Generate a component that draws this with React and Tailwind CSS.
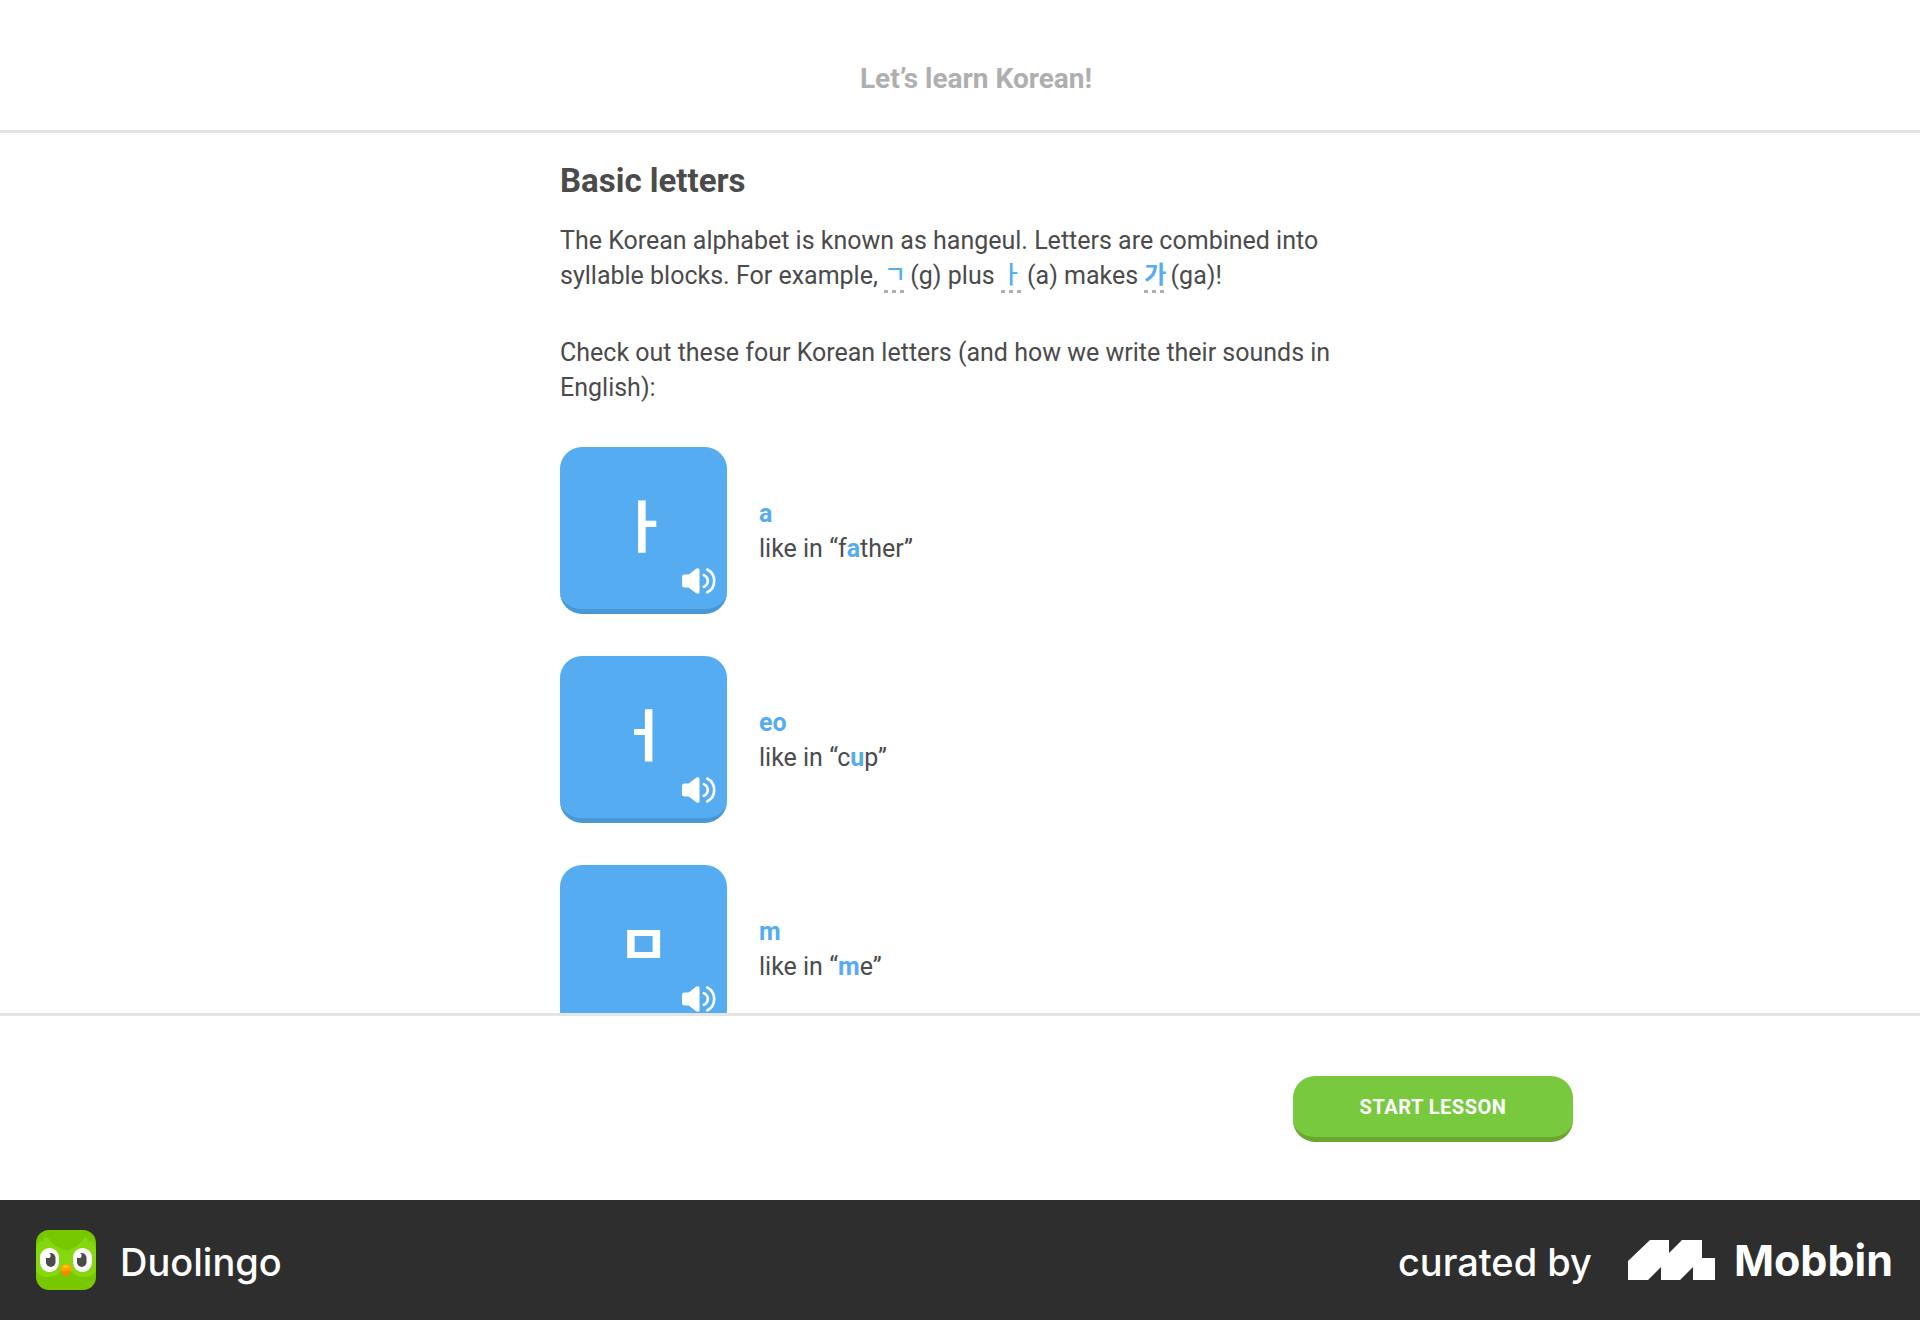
const Hint = ({ children, bold }) => (
  <span
    className={
      "inline-block h-[35px] w-[20px] bg-[repeating-linear-gradient(90deg,#afafaf_0_4px,transparent_4px_8px)] bg-[length:100%_3px] bg-bottom bg-no-repeat text-center align-top text-2xl leading-[35px] text-[#55acf1] " +
      (bold ? "font-bold" : "font-medium")
    }
  >
    {children}
  </span>
);

const Speaker = () => (
  <svg viewBox="0 0 34 26" className="h-[26px] w-[34px]" aria-hidden="true">
    <path
      d="M2.500 6.500H6c.7 0 1.200-.2 1.700-.7L13.800.9C15.400-.5 17.500.2 17.500 1.800v22.400c0 1.600-2.100 2.300-3.700.9L7.700 20.200c-.5-.5-1-.7-1.700-.7H2.500C.9 19.500 0 18.500 0 17V9c0-1.500.9-2.500 2.500-2.500z"
      fill="#fff"
    />
    <path
      d="M21.800 7.200c2.500 1.200 4 3.200 4 5.800s-1.500 4.600-4 5.800M25.200 1.500c4.500 2.300 7 6.300 7 11.500s-2.500 9.200-7 11.500"
      fill="none"
      stroke="#fff"
      strokeWidth="2.600"
      strokeLinecap="round"
    />
  </svg>
);

const DuoLogo = () => (
  <svg viewBox="0 0 60 60" className="h-[60px] w-[60px] rounded-[13px]" aria-hidden="true">
    <rect width="60" height="60" fill="#78c800" />
    <path
      d="M0 20c1-4 2-7 4-9l3 1 2-5c2 0 4 2 5 4 4 5 9 7 13 9h6c4-2 9-4 13-9 1-2 3-4 5-4l2 5 3-1c2 2 3 5 4 9v18c0 6-5 9-11 9-7 0-12-3-14-6H25c-2 3-7 6-14 6-6 0-11-3-11-9z"
      fill="#84d80d"
    />
    <rect x="4" y="18" width="19" height="24" rx="9.500" fill="#fff" />
    <rect x="37" y="18" width="19" height="24" rx="9.500" fill="#fff" />
    <rect x="10" y="23" width="9.500" height="14" rx="4.750" fill="#4b4b4b" />
    <rect x="41" y="23" width="9.500" height="14" rx="4.750" fill="#4b4b4b" />
    <circle cx="12" cy="25.500" r="2.600" fill="#fff" />
    <circle cx="43" cy="25.500" r="2.600" fill="#fff" />
    <path d="M25 39h10l-1 5c-.5 1.500-2 2-4 2s-3.500-.5-4-2z" fill="#f08a00" />
    <path d="M23.500 39c0-2 4-5 6.500-5s6.500 3 6.500 5c0 1.500-3 2-6.500 2s-6.500-.5-6.500-2z" fill="#ffa200" />
    <path d="M27 36.500c1-2 5-2 6 0 .4 1-1 1.500-3 1.500s-3.400-.5-3-1.500z" fill="#ffc800" />
  </svg>
);

const MobbinLogo = () => (
  <svg viewBox="0 0 87 40" className="h-[40px] w-[87px]" aria-hidden="true">
    <path
      d="M0 21L22 0h19v13L54 0h20v18h13v22H65V27L52 40H33V27L20 40H0z"
      fill="#fff"
    />
  </svg>
);

const letters = [
  { glyph: "ㅏ", sound: "a", before: "f", after: "ther" },
  { glyph: "ㅓ", sound: "eo", key: "u", before: "c", after: "p" },
  { glyph: "ㅁ", sound: "m", before: "", after: "e" },
];

export default function App() {
  return (
    <div className="flex h-screen flex-col bg-white font-[Roboto,'Noto_Sans_CJK_KR',sans-serif] text-[#4b4b4b]">
      <header className="flex h-[133px] shrink-0 items-center justify-center border-b-[3px] border-[#e5e5e5] pt-[28px] pl-8">
        <h1 className="text-[28px] font-bold text-[#afafaf]">Let’s learn Korean!</h1>
      </header>

      <main className="min-h-0 flex-1 overflow-y-auto [scrollbar-width:none]">
        <div className="mx-auto max-w-[800px] pt-[28px] text-[25px] leading-[35px]">
          <h2 className="text-[33px] leading-[40px] font-bold">Basic letters</h2>
          <p className="mt-[22px]">
            The Korean alphabet is known as hangeul. Letters are combined into
            <br />
            syllable blocks. For example, <Hint>ㄱ</Hint> (g) plus <Hint>ㅏ</Hint> (a) makes{" "}
            <Hint bold>가</Hint> (ga)!
          </p>
          <p className="mt-[42px]">
            Check out these four Korean letters (and how we write their sounds in
            <br />
            English):
          </p>
          <ul className="mt-[42px] flex flex-col gap-[42px]">
            {letters.map((l) => (
              <li key={l.sound} className="flex items-center gap-8">
                <button
                  type="button"
                  aria-label={"Play " + l.sound}
                  className="relative flex size-[167px] items-center justify-center rounded-[22px] border-b-[5px] border-[#4a97d6] bg-[#55acf1] text-[56px] leading-none font-bold text-white"
                >
                  {l.glyph}
                  <span className="absolute right-[11px] bottom-[15px]">
                    <Speaker />
                  </span>
                </button>
                <p>
                  <b className="text-[#55acf1]">{l.sound}</b>
                  <br />
                  like in “{l.before}
                  <b className="text-[#55acf1]">{l.key || l.sound}</b>
                  {l.after}”
                </p>
              </li>
            ))}
          </ul>
        </div>
      </main>

      <section className="shrink-0 border-t-[3px] border-[#e5e5e5] px-8">
        <div className="mx-auto flex h-[184px] max-w-[1226px] items-center justify-end pt-[2px]">
          <button
            type="button"
            className="h-[66px] w-[280px] rounded-[22px] border-b-[5px] border-[#69a72f] bg-[#78c93e] text-xl font-bold tracking-wide text-white"
          >
            START LESSON
          </button>
        </div>
      </section>

      <footer className="flex h-[120px] shrink-0 items-center justify-between bg-[#2e2e2e] pr-[27px] pl-[36px] font-[Inter,sans-serif] text-[38px] text-white">
        <div className="flex items-center gap-6">
          <DuoLogo />
          <span className="pt-1 font-medium">Duolingo</span>
        </div>
        <div className="flex items-center">
          <span className="pt-1 font-medium">curated by</span>
          <span className="ml-[36px] flex items-center gap-[19px] text-[43px] font-bold">
            <MobbinLogo />
            Mobbin
          </span>
        </div>
      </footer>
    </div>
  );
}
